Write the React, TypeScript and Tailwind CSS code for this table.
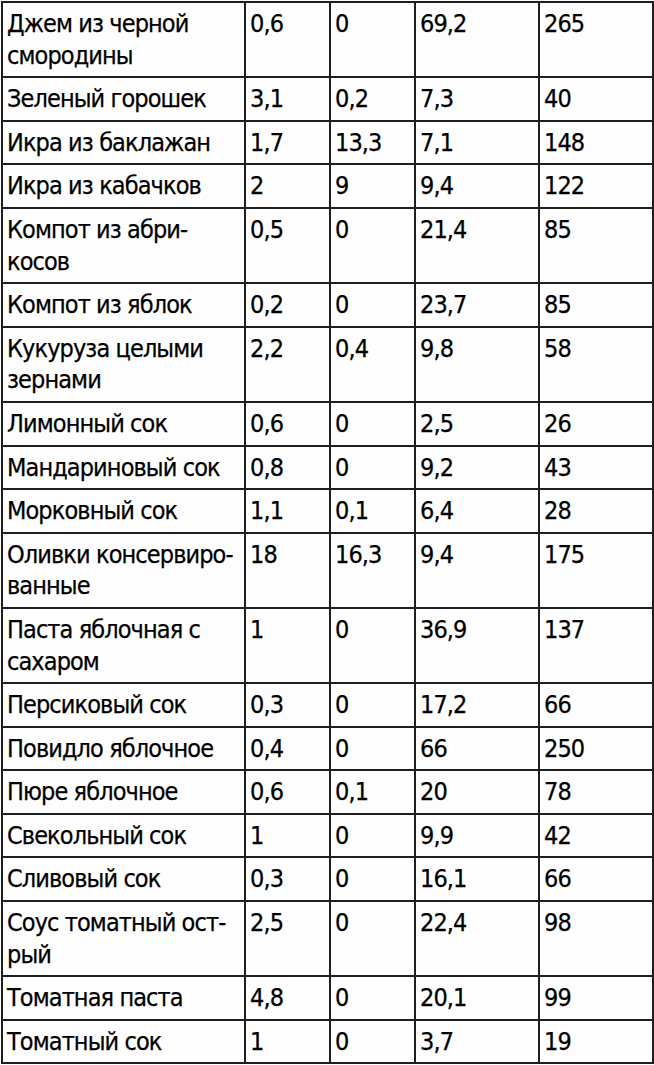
const rows: [string[], string, string, string, string][] = [
  [['Джем из черной', 'смородины'], '0,6', '0', '69,2', '265'],
  [['Зеленый горошек'], '3,1', '0,2', '7,3', '40'],
  [['Икра из баклажан'], '1,7', '13,3', '7,1', '148'],
  [['Икра из кабачков'], '2', '9', '9,4', '122'],
  [['Компот из абри-', 'косов'], '0,5', '0', '21,4', '85'],
  [['Компот из яблок'], '0,2', '0', '23,7', '85'],
  [['Кукуруза целыми', 'зернами'], '2,2', '0,4', '9,8', '58'],
  [['Лимонный сок'], '0,6', '0', '2,5', '26'],
  [['Мандариновый сок'], '0,8', '0', '9,2', '43'],
  [['Морковный сок'], '1,1', '0,1', '6,4', '28'],
  [['Оливки консервиро-', 'ванные'], '18', '16,3', '9,4', '175'],
  [['Паста яблочная с', 'сахаром'], '1', '0', '36,9', '137'],
  [['Персиковый сок'], '0,3', '0', '17,2', '66'],
  [['Повидло яблочное'], '0,4', '0', '66', '250'],
  [['Пюре яблочное'], '0,6', '0,1', '20', '78'],
  [['Свекольный сок'], '1', '0', '9,9', '42'],
  [['Сливовый сок'], '0,3', '0', '16,1', '66'],
  [['Соус томатный ост-', 'рый'], '2,5', '0', '22,4', '98'],
  [['Томатная паста'], '4,8', '0', '20,1', '99'],
  [['Томатный сок'], '1', '0', '3,7', '19'],
]

const cell = 'border-2 border-[#1e1e1e] px-[4px] py-[5px] align-top overflow-hidden'

export default function App() {
  return (
    <div className="min-h-screen bg-[#fdfdfd] pt-[1px] pl-[1px]">
      <table
        className="table-fixed w-[653px] border-collapse text-[25px] leading-[31.6px] tracking-[-0.9px] text-black [-webkit-text-stroke:0.25px_#000]"
        style={{ fontFamily: '"DejaVu Sans Condensed", "DejaVu Sans", sans-serif' }}
      >
        <colgroup>
          <col className="w-[243px]" />
          <col className="w-[85px]" />
          <col className="w-[85px]" />
          <col className="w-[124px]" />
          <col className="w-[114px]" />
        </colgroup>
        <tbody>
          {rows.map(([name, p, f, c, k], i) => (
            <tr key={i}>
              <td className={cell + ' whitespace-nowrap'}>
                {name.map((line, j) => (
                  <div key={j}>{line}</div>
                ))}
              </td>
              <td className={cell}>{p}</td>
              <td className={cell}>{f}</td>
              <td className={cell}>{c}</td>
              <td className={cell}>{k}</td>
            </tr>
          ))}
        </tbody>
      </table>
    </div>
  )
}
